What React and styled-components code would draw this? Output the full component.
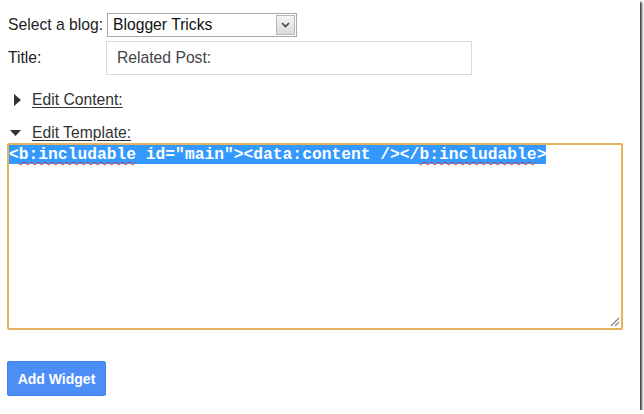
import React from "react";
import styled, { createGlobalStyle } from "styled-components";

const Global = createGlobalStyle`
  html, body { margin: 0; padding: 0; background: #fff; }
  body { font-family: "Liberation Sans", Arial, sans-serif; color: #222; }
`;

const Frame = styled.div`
  width: 640px;
  height: 410px;
  box-sizing: border-box;
  background: #fff;
  box-shadow: 2px 2px 2px rgba(0,0,0,0.75);
  padding: 13px 0 0 0;
  display: flex;
  flex-direction: column;
  font-size: 15.7px;
  overflow: hidden;
`;

const FormGrid = styled.div`
  display: grid;
  grid-template-columns: 98px auto;
  row-gap: 4px;
  align-items: center;
  padding-left: 8px;
  justify-content: start;
`;

const Label = styled.span`
  font-size: 15.7px;
  color: #222;
`;

const Select = styled.div`
  margin-left: ${p => p.$offset || 0}px;
  width: 190px;
  height: 24px;
  box-sizing: border-box;
  border: 1px solid #a9a9a9;
  display: flex;
  align-items: center;
  background: #fff;
`;

const SelectText = styled.span`
  flex: 1;
  padding-left: 5px;
  color: #111;
`;

const SelectButton = styled.span`
  width: 19px;
  height: 20px;
  margin-right: 1px;
  box-sizing: border-box;
  border: 1px solid #b5b5b5;
  background: linear-gradient(#f4f4f4, #dcdcdc);
  display: flex;
  align-items: center;
  justify-content: center;
`;

const TextInput = styled.div`
  width: 366px;
  height: 34px;
  box-sizing: border-box;
  border: 1px solid #d9d9d9;
  display: flex;
  align-items: center;
  padding-left: 10px;
  color: #444;
`;

const Toggle = styled.div`
  display: flex;
  align-items: center;
  margin-top: ${p => p.$top}px;
  padding-left: ${p => p.$pad}px;
  gap: ${p => p.$gap}px;
  height: 20px;
`;

const ToggleText = styled.span`
  text-decoration: underline;
  text-underline-offset: 2px;
  color: #333;
`;

const Editor = styled.div`
  position: relative;
  margin: 0 0 0 7px;
  width: 616px;
  height: 187px;
  box-sizing: border-box;
  border: 2px solid #e3b25a;
  border-radius: 2px;
`;

const Code = styled.div`
  font-family: "Liberation Mono", "Courier New", monospace;
  font-size: 16.3px;
  font-weight: bold;
  line-height: 19px;
  padding-top: 0;
`;

const Selected = styled.span`
  background: #3399ff;
  color: #fff;
`;

const Misspelled = styled.span`
  text-decoration: underline wavy #e0302a;
  text-decoration-thickness: 1px;
  text-underline-offset: 2px;
`;

const Grip = styled.svg`
  position: absolute;
  right: 1px;
  bottom: 1px;
`;

const Button = styled.button`
  margin: 31px 0 0 7px;
  align-self: flex-start;
  width: 99px;
  height: 35px;
  border: 1px solid #3b82ee;
  border-radius: 2px;
  background: #4d8ef6;
  color: #fff;
  font-family: "Liberation Sans", Arial, sans-serif;
  font-weight: bold;
  font-size: 14px;
  padding: 0;
`;

export default function App() {
  return (
    <>
      <Global />
      <Frame>
        <FormGrid>
          <Label>Select a blog:</Label>
          <Select $offset={1}>
            <SelectText>Blogger Tricks</SelectText>
            <SelectButton>
              <svg width="9" height="6" viewBox="0 0 9 6">
                <path d="M1 1 L4.5 4.5 L8 1" fill="none" stroke="#444" strokeWidth="1.6" />
              </svg>
            </SelectButton>
          </Select>
          <Label>Title:</Label>
          <TextInput>Related Post:</TextInput>
        </FormGrid>
        <Toggle $top={15} $pad={14} $gap={11}>
          <svg width="7" height="12" viewBox="0 0 7 12">
            <path d="M0 0 L7 6 L0 12 Z" fill="#333" />
          </svg>
          <ToggleText>Edit Content:</ToggleText>
        </Toggle>
        <Toggle $top={13} $pad={10} $gap={11}>
          <svg width="11" height="6" viewBox="0 0 11 6">
            <path d="M0 0 L11 0 L5.5 6 Z" fill="#333" />
          </svg>
          <ToggleText>Edit Template:</ToggleText>
        </Toggle>
        <Editor>
          <Code>
            <Selected>
              {"<"}<Misspelled>b:includable</Misspelled>{' id="main"><data:content /></'}
              <Misspelled>b:includable</Misspelled>{">"}
            </Selected>
          </Code>
          <Grip width="11" height="11" viewBox="0 0 11 11">
            <path d="M10 2 L2 10 M10 6 L6 10" stroke="#888" strokeWidth="1.2" />
          </Grip>
        </Editor>
        <Button>Add Widget</Button>
      </Frame>
    </>
  );
}
